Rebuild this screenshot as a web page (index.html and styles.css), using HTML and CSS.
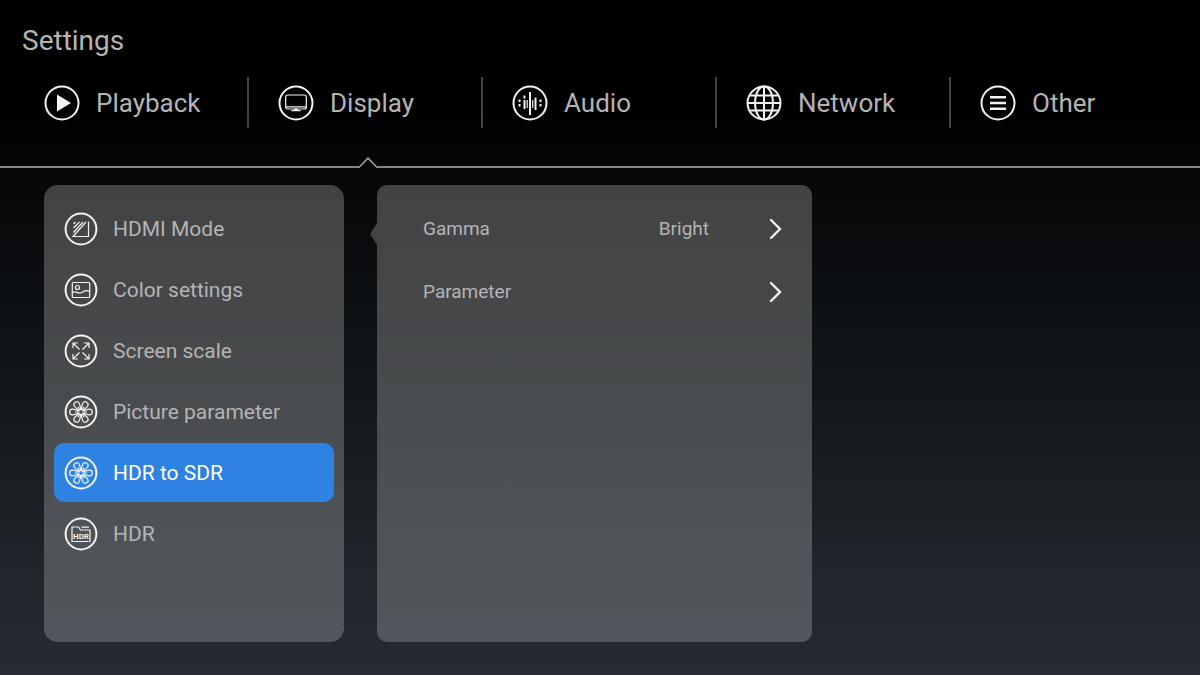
FILE: index.html
```
<!DOCTYPE html>
<html lang="en">
<head>
	<meta charset="UTF-8">
	<title>Settings</title>
	<link rel="stylesheet" href="styles.css">
</head>
<body>
<h1 class="title">Settings</h1>
<nav class="tabs">
	<button type="button" class="tab">
		<svg class="tab_icon" viewBox="0 0 36 36"><circle cx="18" cy="18" r="16.5"/><path class="fill" d="M13 9.5v17L27 18z"/></svg>
		Playback
	</button>
	<button type="button" class="tab">
		<svg class="tab_icon" viewBox="0 0 36 36"><circle cx="18" cy="18" r="16.5"/><rect class="thin" x="7.7" y="10" width="20.6" height="14" rx="2"/><path class="thin" d="M7.7 21.8h20.6M13.5 25.6h9"/><path class="fill" d="M16 23.5h4v2.5h-4z"/></svg>
		Display
	</button>
	<button type="button" class="tab">
		<svg class="tab_icon" viewBox="0 0 36 36"><circle cx="18" cy="18" r="16.5"/><path d="M18 7v23M12.500 10.500v3M12.500 15v9M23.500 12.500v12.500M7.500 14.500v2.500M7.500 19v2.500M28.500 14.500v2.500M28.500 19v2.500"/><path class="thin" d="M15.200 15v8M20.700 15v8"/></svg>
		Audio
	</button>
	<button type="button" class="tab">
		<svg class="tab_icon" viewBox="0 0 36 36"><circle cx="18" cy="18" r="16.5"/><ellipse cx="18" cy="18" rx="9" ry="16.5"/><path d="M18 1.5v33M1.5 18h33M4 10.500h28M4 25.500h28"/></svg>
		Network
	</button>
	<button type="button" class="tab">
		<svg class="tab_icon" viewBox="0 0 36 36"><circle cx="18" cy="18" r="16.5"/><path class="bars" d="M10 12.200h16M10 18h16M10 23.800h16"/></svg>
		Other
	</button>
</nav>
<div class="rule">
	<span class="rule_left"></span>
	<svg class="rule_notch" viewBox="0 0 20 11"><path d="M0 10.200h1L10 1.200l9 9h1"/></svg>
	<span class="rule_right"></span>
</div>
<main class="content">
	<ul class="panel menu">
		<li><button type="button" class="item">
			<svg class="item_icon" viewBox="0 0 34 34"><circle cx="17" cy="17" r="15.4"/><path class="thin" d="M24.500 9.500v15H9L22 10M9.500 12l2-2M9.500 16l6-6M9.500 20.500l9.500-10.500"/></svg>
			HDMI Mode
		</button></li>
		<li><button type="button" class="item">
			<svg class="item_icon" viewBox="0 0 34 34"><circle cx="17" cy="17" r="15.4"/><rect class="thin" x="8.3" y="9.5" width="17.4" height="15" rx="1"/><circle class="thin" cx="13.500" cy="14.500" r="2"/><path class="thin" d="M8.500 19.500c3-2 5 1 8 .5s4-4.500 9-1.500"/></svg>
			Color settings
		</button></li>
		<li><button type="button" class="item">
			<svg class="item_icon" viewBox="0 0 34 34"><circle cx="17" cy="17" r="15.4"/><path class="thin" d="M9 14V9h5M20 9h5v5M25 20v5h-5M14 25H9v-5M9 9l6.500 6.500M25 9l-6.500 6.500M25 25l-6.500-6.500M9 25l6.500-6.500"/></svg>
			Screen scale
		</button></li>
		<li><button type="button" class="item">
			<svg class="item_icon" viewBox="0 0 34 34">
				<defs><path id="petal" d="M16 15.500C15.500 12.500 14.200 11 14.200 8.500a2.800 2.800 0 0 1 5.600 0c0 2.500-1.300 4-1.800 7M17 14.500v-3.500"/></defs>
				<circle cx="17" cy="17" r="15.4"/>
				<g class="thin"><use href="#petal" transform="rotate(30 17 17)"/><use href="#petal" transform="rotate(90 17 17)"/><use href="#petal" transform="rotate(150 17 17)"/><use href="#petal" transform="rotate(210 17 17)"/><use href="#petal" transform="rotate(270 17 17)"/><use href="#petal" transform="rotate(330 17 17)"/></g>
			</svg>
			Picture parameter
		</button></li>
		<li><button type="button" class="item active">
			<svg class="item_icon" viewBox="0 0 34 34">
				<circle cx="17" cy="17" r="15.4"/>
				<g class="thin"><use href="#petal" transform="rotate(30 17 17)"/><use href="#petal" transform="rotate(90 17 17)"/><use href="#petal" transform="rotate(150 17 17)"/><use href="#petal" transform="rotate(210 17 17)"/><use href="#petal" transform="rotate(270 17 17)"/><use href="#petal" transform="rotate(330 17 17)"/></g>
			</svg>
			HDR to SDR
		</button></li>
		<li><button type="button" class="item">
			<svg class="item_icon" viewBox="0 0 34 34"><circle cx="17" cy="17" r="15.4"/><path class="thin" d="M9.500 24.500H8V10h6.500l2 3H26v11.500h-1.500M10 24.500h14M17.500 10.200H25"/><text x="17" y="22" class="hdr">HDR</text></svg>
			HDR
		</button></li>
	</ul>
	<section class="panel detail">
		<button type="button" class="row">
			<span class="name">Gamma</span>
			<span class="value">Bright</span>
			<svg class="arrow" viewBox="0 0 14 22"><path d="M2 2l9 9-9 9"/></svg>
		</button>
		<button type="button" class="row">
			<span class="name">Parameter</span>
			<svg class="arrow" viewBox="0 0 14 22"><path d="M2 2l9 9-9 9"/></svg>
		</button>
	</section>
</main>
</body>
</html>
```
FILE: styles.css
```
* {box-sizing:border-box;}
body,h1,ul,button {margin:0; padding:0;}
body {min-height:100vh; display:flex; flex-direction:column; font-family:Roboto,"Noto Sans",sans-serif; color:#b4b4b4; background:linear-gradient(#000 0%,#000 15%,#07090b 30%,#14181b 60%,#20262c 85%,#272a33 100%);}
button {border:none; background:none; font:inherit; color:inherit; text-align:left; cursor:pointer;}
svg {flex:none; fill:none; stroke:#f2f2f2; stroke-width:2;}
.fill {fill:#f2f2f2; stroke:none;}
.thin {stroke-width:1.2;}

.title {padding:24px 22px 0; font-size:28px; font-weight:400; line-height:34px;}

.tabs {display:flex; padding:19px 0 0 15px;}
.tab {width:19.5vw; height:51px; display:flex; align-items:center; gap:16px; padding-left:29px; font-size:26px; border-right:2px solid #444;}
.tab:last-child {border-right:none;}
.tab_icon {width:36px; height:36px;}
.bars {stroke-width:2.6;}

.rule {display:flex; align-items:flex-end; margin-top:29px;}
.rule_left {width:calc(30vw - 2px); border-bottom:2px solid #858585;}
.rule_right {flex:1; border-bottom:2px solid #858585;}
.rule_notch {width:20px; height:11px; stroke:#a0a0a0; stroke-width:1.6;}

.content {flex:1; display:grid; grid-template-columns:25vw 36.25vw; gap:33px; padding:17px 44px 33px;}
.panel {border-radius:14px; background:linear-gradient(rgba(255,255,255,.24),rgba(255,255,255,.21));}

.menu {list-style:none; display:flex; flex-direction:column; gap:2px; padding:14px 10px;}
.item {width:100%; height:59px; display:flex; align-items:center; gap:15px; padding-left:10px; border-radius:10px; font-size:21px;}
.item_icon {width:34px; height:34px;}
.active {background:#2e82e2; color:#fff;}
.hdr {font:700 8px Roboto,sans-serif; text-anchor:middle; fill:#f2f2f2; stroke:none;}

.detail {position:relative; padding:12px 29px 12px 46px; border-radius:10px;}
/* pointer towards the menu */
.detail::before {content:""; position:absolute; left:-7px; top:38px; border:solid transparent; border-width:11px 7px 11px 0; border-right-color:#404142;}
.row {width:100%; height:63px; display:flex; align-items:center; font-size:19px;}
.name {flex:1;}
.value {margin-right:60px;}
.arrow {width:14px; height:22px; stroke-width:2.4; stroke-linecap:round;}
```
